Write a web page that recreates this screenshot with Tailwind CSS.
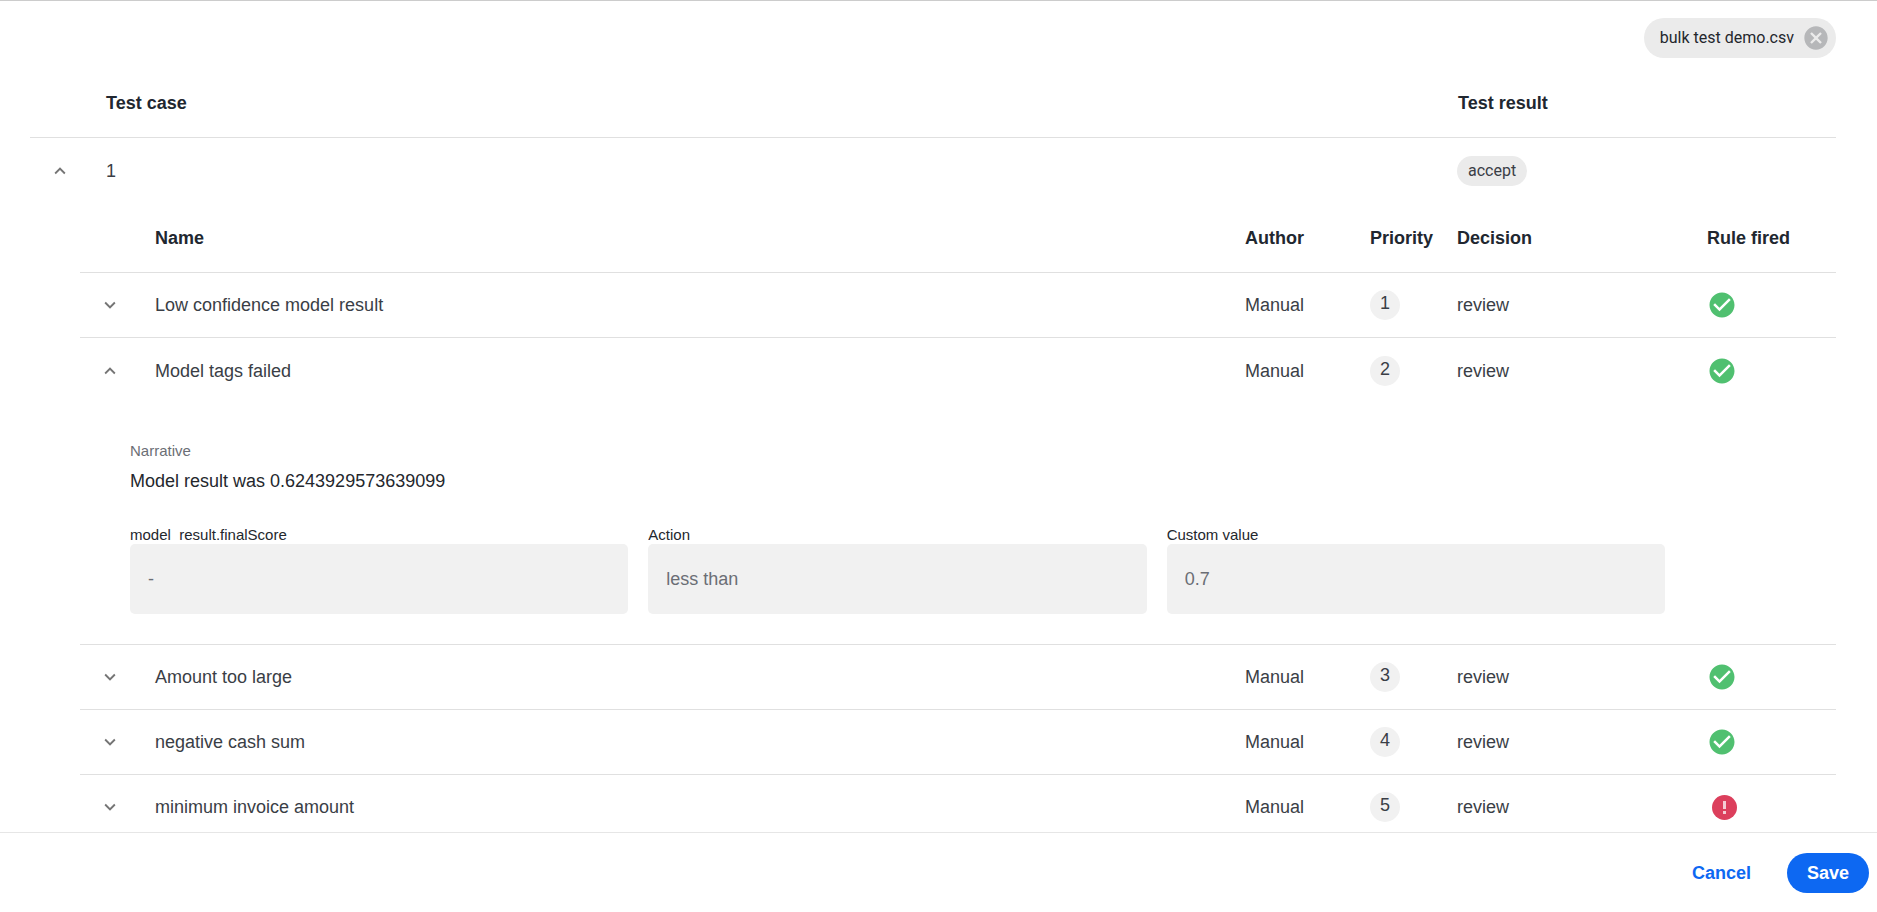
<!DOCTYPE html>
<html lang="en">

<head>
  <meta charset="UTF-8" />
  <meta name="viewport" content="width=device-width, initial-scale=1.0" />
  <title>Bulk test</title>
  <script src="https://cdn.jsdelivr.net/npm/@tailwindcss/browser@4"></script>
</head>

<body class="flex flex-col h-screen bg-white text-lg leading-7 text-[#3a3e46] font-['Liberation_Sans',Arial,sans-serif]">

  <!-- shared icons -->
  <svg class="hidden">
    <symbol id="icon-down" viewBox="0 0 24 24"><path d="M16.59 8.59 12 13.17 7.41 8.59 6 10l6 6 6-6z" /></symbol>
    <symbol id="icon-up" viewBox="0 0 24 24"><path d="m12 8-6 6 1.41 1.41L12 10.83l4.59 4.58L18 14z" /></symbol>
    <symbol id="icon-check" viewBox="0 0 24 24"><path d="M12 2C6.48 2 2 6.48 2 12s4.48 10 10 10 10-4.48 10-10S17.52 2 12 2zm-2 15-5-5 1.41-1.41L10 14.17l7.59-7.59L19 8l-9 9z" /></symbol>
    <symbol id="icon-cancel" viewBox="0 0 24 24"><path d="M12 2C6.47 2 2 6.47 2 12s4.47 10 10 10 10-4.47 10-10S17.53 2 12 2zm5 13.59L15.59 17 12 13.41 8.41 17 7 15.59 10.59 12 7 8.41 8.41 7 12 10.59 15.59 7 17 8.41 13.41 12 17 15.59z" /></symbol>
  </svg>

  <!-- results -->
  <main class="flex-1 min-h-0 overflow-y-auto [scrollbar-width:none] border-t border-[#cccccc] pt-[17px] pl-[30px] pr-[41px]">

    <div class="flex justify-end mb-[10px]">
      <div class="flex items-center h-10 pl-4 pr-[6px] gap-2 rounded-full bg-[#ebebeb] text-base text-[#24272d] font-[Roboto,sans-serif]">
        <span>bulk test demo.csv</span>
        <button type="button" aria-label="Remove file" class="cursor-pointer">
          <svg class="block size-7 fill-[#b6b7b9]"><use href="#icon-cancel" /></svg>
        </button>
      </div>
    </div>

    <table class="w-full table-fixed border-separate border-spacing-0 text-left">
      <colgroup>
        <col class="w-[60px]">
        <col>
        <col class="w-[394px]">
      </colgroup>
      <thead>
        <tr class="h-[70px] [&>*]:border-b [&>*]:border-[#e0e0e0] text-[#212730]">
          <th></th>
          <th class="pl-4 font-bold">Test case</th>
          <th class="pl-4 font-bold">Test result</th>
        </tr>
      </thead>
      <tbody>
        <tr class="h-[65px]">
          <td><button type="button" aria-label="Collapse" class="block mx-auto cursor-pointer"><svg class="block size-[22px] fill-[#757575]"><use href="#icon-up" /></svg></button></td>
          <td class="pl-4">1</td>
          <td class="pl-[15px]"><span class="flex items-center w-fit h-[30px] px-[11px] rounded-full bg-[#ebebeb] text-base font-[Roboto,sans-serif]">accept</span></td>
        </tr>
        <tr>
          <td colspan="3" class="pl-[50px]">

            <!-- rules -->
            <table class="w-full table-fixed border-separate border-spacing-0 text-left">
              <colgroup>
                <col class="w-[60px]">
                <col>
                <col class="w-[125px]">
                <col class="w-[87px]">
                <col class="w-[250px]">
                <col class="w-[144px]">
              </colgroup>
              <thead>
                <tr class="h-[70px] [&>*]:border-b [&>*]:border-[#e0e0e0] text-[#212730]">
                  <th></th>
                  <th class="pl-[15px] font-bold">Name</th>
                  <th class="pl-[15px] font-bold">Author</th>
                  <th class="pl-[15px] font-bold">Priority</th>
                  <th class="pl-[15px] font-bold">Decision</th>
                  <th class="pl-[15px] font-bold">Rule fired</th>
                </tr>
              </thead>
              <tbody>
                <tr class="h-[65px] [&>*]:border-b [&>*]:border-[#e0e0e0]">
                  <td><button type="button" aria-label="Expand" class="block mx-auto cursor-pointer"><svg class="block size-[22px] fill-[#757575]"><use href="#icon-down" /></svg></button></td>
                  <td class="pl-[15px]">Low confidence model result</td>
                  <td class="pl-[15px]">Manual</td>
                  <td class="pl-[15px]"><span class="block size-[30px] rounded-full bg-[#f1f1f1] text-center leading-[27px]">1</span></td>
                  <td class="pl-[15px]">review</td>
                  <td class="pl-[15px]"><svg class="block size-[30px] fill-[#50c070]" role="img" aria-label="Fired"><use href="#icon-check" /></svg></td>
                </tr>
                <tr class="h-[65px]">
                  <td><button type="button" aria-label="Collapse" class="block mx-auto cursor-pointer"><svg class="block size-[22px] fill-[#757575]"><use href="#icon-up" /></svg></button></td>
                  <td class="pl-[15px]">Model tags failed</td>
                  <td class="pl-[15px]">Manual</td>
                  <td class="pl-[15px]"><span class="block size-[30px] rounded-full bg-[#f1f1f1] text-center leading-[27px]">2</span></td>
                  <td class="pl-[15px]">review</td>
                  <td class="pl-[15px]"><svg class="block size-[30px] fill-[#50c070]" role="img" aria-label="Fired"><use href="#icon-check" /></svg></td>
                </tr>

                <!-- rule details -->
                <tr class="[&>*]:border-b [&>*]:border-[#e0e0e0]">
                  <td colspan="6" class="pt-[38px] pb-[30px] pl-[50px] pr-[171px] text-[#24272d]">
                    <p class="text-[15px] leading-5 text-[#6b6e75]">Narrative</p>
                    <p class="mt-[6px] mb-[31px]">Model result was 0.6243929573639099</p>
                    <div class="grid grid-cols-3 gap-5">
                      <div>
                        <label for="score" class="block h-4 mb-[2px] overflow-hidden text-[15px] leading-[18px]">model_result.finalScore</label>
                        <input id="score" type="text" value="-" disabled class="block w-full h-[70px] px-[18px] rounded-[5px] bg-[#f1f1f1] text-[#6b6e75]">
                      </div>
                      <div>
                        <label for="action" class="block h-4 mb-[2px] overflow-hidden text-[15px] leading-[18px]">Action</label>
                        <input id="action" type="text" value="less than" disabled class="block w-full h-[70px] px-[18px] rounded-[5px] bg-[#f1f1f1] text-[#6b6e75]">
                      </div>
                      <div>
                        <label for="custom" class="block h-4 mb-[2px] overflow-hidden text-[15px] leading-[18px]">Custom value</label>
                        <input id="custom" type="text" value="0.7" disabled class="block w-full h-[70px] px-[18px] rounded-[5px] bg-[#f1f1f1] text-[#6b6e75]">
                      </div>
                    </div>
                  </td>
                </tr>

                <tr class="h-[65px] [&>*]:border-b [&>*]:border-[#e0e0e0]">
                  <td><button type="button" aria-label="Expand" class="block mx-auto cursor-pointer"><svg class="block size-[22px] fill-[#757575]"><use href="#icon-down" /></svg></button></td>
                  <td class="pl-[15px]">Amount too large</td>
                  <td class="pl-[15px]">Manual</td>
                  <td class="pl-[15px]"><span class="block size-[30px] rounded-full bg-[#f1f1f1] text-center leading-[27px]">3</span></td>
                  <td class="pl-[15px]">review</td>
                  <td class="pl-[15px]"><svg class="block size-[30px] fill-[#50c070]" role="img" aria-label="Fired"><use href="#icon-check" /></svg></td>
                </tr>
                <tr class="h-[65px] [&>*]:border-b [&>*]:border-[#e0e0e0]">
                  <td><button type="button" aria-label="Expand" class="block mx-auto cursor-pointer"><svg class="block size-[22px] fill-[#757575]"><use href="#icon-down" /></svg></button></td>
                  <td class="pl-[15px]">negative cash sum</td>
                  <td class="pl-[15px]">Manual</td>
                  <td class="pl-[15px]"><span class="block size-[30px] rounded-full bg-[#f1f1f1] text-center leading-[27px]">4</span></td>
                  <td class="pl-[15px]">review</td>
                  <td class="pl-[15px]"><svg class="block size-[30px] fill-[#50c070]" role="img" aria-label="Fired"><use href="#icon-check" /></svg></td>
                </tr>
                <tr class="h-[65px] [&>*]:border-b [&>*]:border-[#e0e0e0]">
                  <td><button type="button" aria-label="Expand" class="block mx-auto cursor-pointer"><svg class="block size-[22px] fill-[#757575]"><use href="#icon-down" /></svg></button></td>
                  <td class="pl-[15px]">minimum invoice amount</td>
                  <td class="pl-[15px]">Manual</td>
                  <td class="pl-[15px]"><span class="block size-[30px] rounded-full bg-[#f1f1f1] text-center leading-[27px]">5</span></td>
                  <td class="pl-[15px]">review</td>
                  <td class="pl-5">
                    <svg class="block size-[25px]" viewBox="0 0 25 25" role="img" aria-label="Not fired">
                      <circle cx="12.5" cy="12.5" r="12.5" fill="#dc3f5c" />
                      <path d="M11 6h3v8h-3zM11 16h3v3h-3z" fill="#f4ccd3" />
                    </svg>
                  </td>
                </tr>
              </tbody>
            </table>

          </td>
        </tr>
      </tbody>
    </table>
  </main>

  <!-- actions -->
  <footer class="flex items-center justify-end h-20 pr-2 gap-4 border-t border-[#e6e6e6] font-bold">
    <button type="button" class="h-10 px-5 rounded-full text-[#0d68f2] cursor-pointer">Cancel</button>
    <button type="button" class="h-10 px-5 rounded-full bg-[#0d68f2] text-white cursor-pointer">Save</button>
  </footer>

</body>

</html>
